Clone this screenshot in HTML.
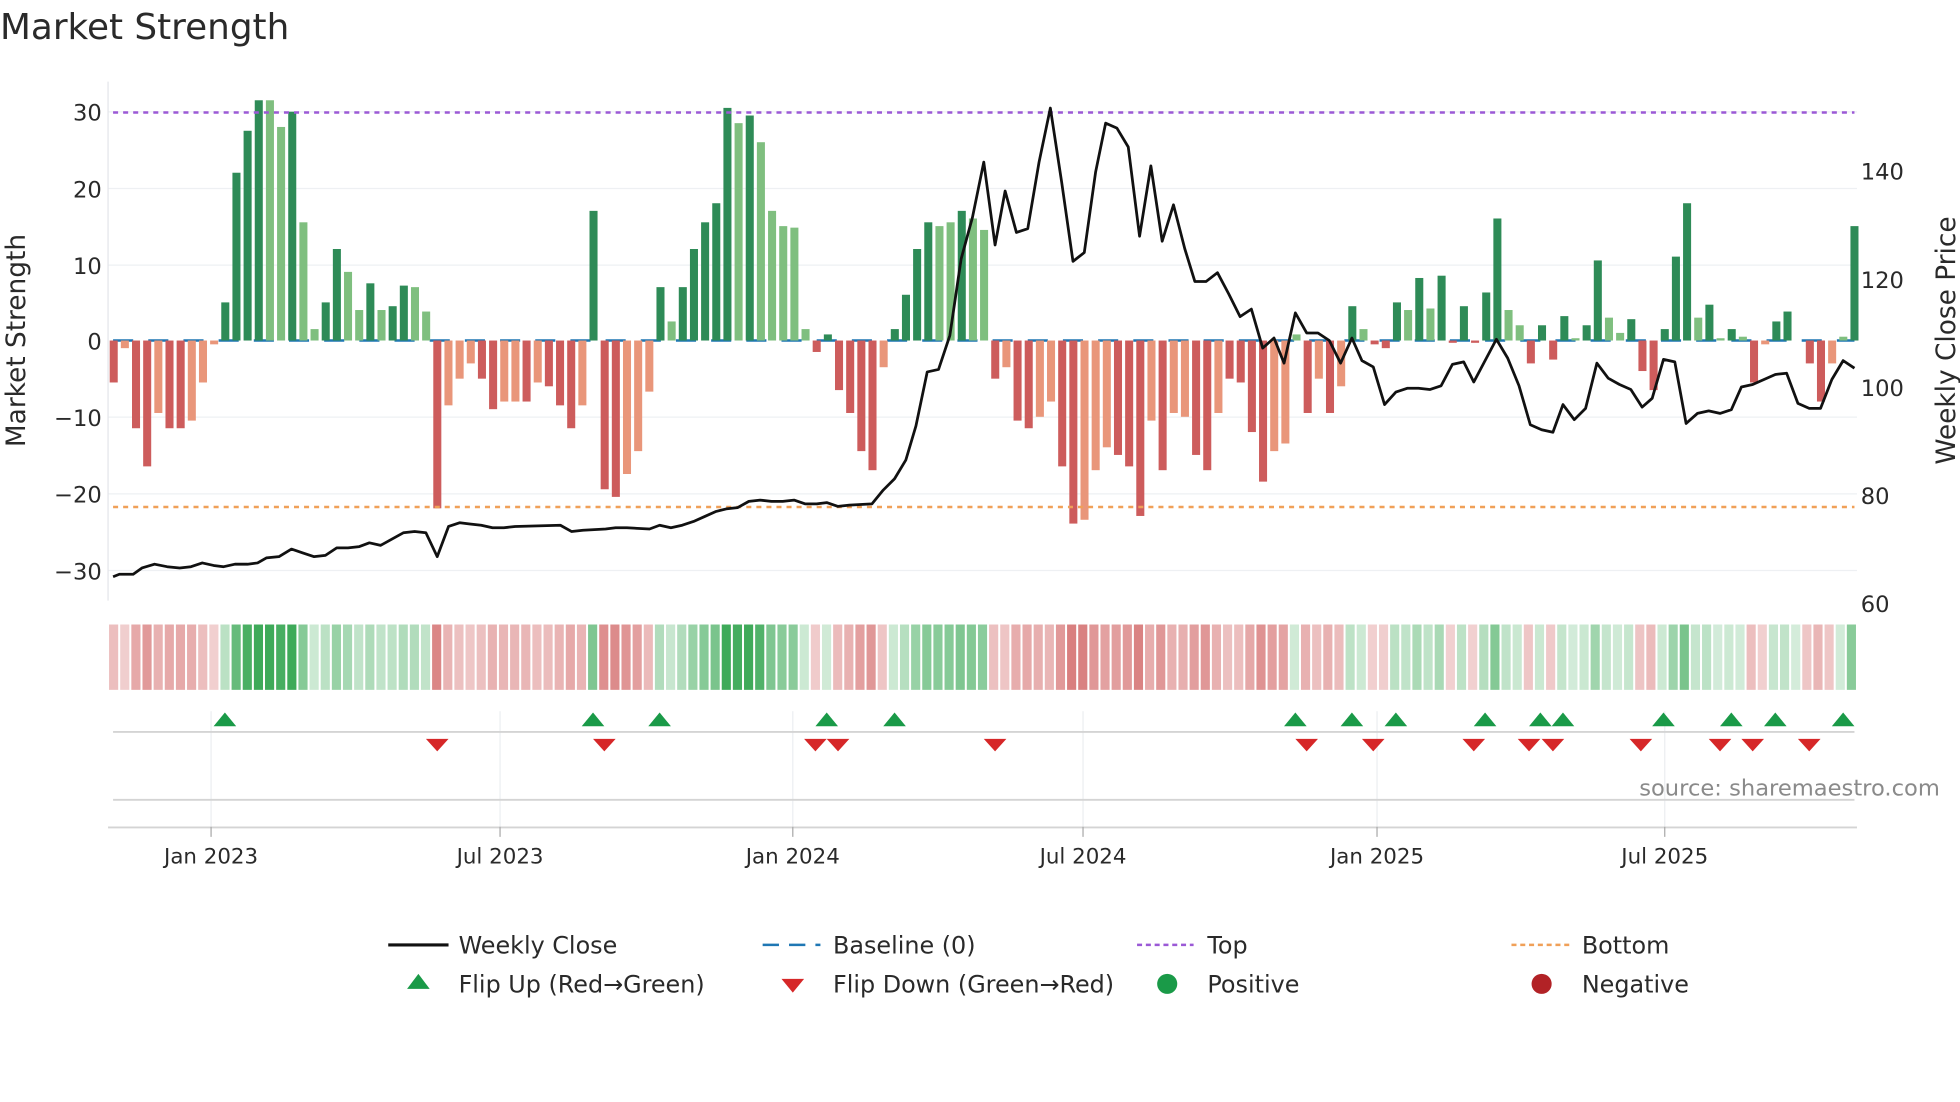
<!DOCTYPE html>
<html><head><meta charset="utf-8"><style>
html,body{margin:0;padding:0;background:#fff;overflow:hidden}
svg{display:block}
text{font-family:"DejaVu Sans","Liberation Sans",sans-serif;fill:#2a2a2a}
</style></head><body>
<svg id="s" width="1960" height="1102" viewBox="0 0 1560 877" preserveAspectRatio="none" xmlns="http://www.w3.org/2000/svg">
<rect width="1560" height="877" fill="#fff"/>
<text x="0" y="31" font-size="28.5">Market Strength</text>
<g stroke="#eef0f3" stroke-width="1">
<line x1="86" y1="89" x2="1478" y2="89"/><line x1="86" y1="150" x2="1478" y2="150"/><line x1="86" y1="211" x2="1478" y2="211"/>
<line x1="86" y1="332" x2="1478" y2="332"/><line x1="86" y1="393" x2="1478" y2="393"/><line x1="86" y1="454" x2="1478" y2="454"/>
</g>
<line x1="86" y1="65" x2="86" y2="478" stroke="#e4e6ea" stroke-width="1"/>
<g font-size="18" text-anchor="end">
<text x="81" y="96">30</text><text x="81" y="157">20</text><text x="81" y="218">10</text><text x="81" y="278">0</text>
<text x="81" y="339">−10</text><text x="81" y="400">−20</text><text x="81" y="461">−30</text>
</g>
<g font-size="18">
<text x="1481" y="143">140</text><text x="1481" y="229">120</text><text x="1481" y="315">100</text><text x="1481" y="401">80</text><text x="1481" y="487">60</text>
</g>
<text transform="translate(20,271) rotate(-90)" font-size="21" text-anchor="middle">Market Strength</text>
<text transform="translate(1556,271) rotate(-90)" font-size="21" text-anchor="middle">Weekly Close Price</text>
<line x1="90" y1="271" x2="1476" y2="271" stroke="#1f77b4" stroke-width="2" stroke-dasharray="16,12"/>
<g id="bars"></g>
<line x1="90" y1="89.5" x2="1476" y2="89.5" stroke="#9b59d6" stroke-width="2" stroke-dasharray="4,4"/>
<line x1="90" y1="403.5" x2="1476" y2="403.5" stroke="#f0a058" stroke-width="2" stroke-dasharray="4,4"/>
<polyline id="price" fill="none" stroke="#111" stroke-width="2.2" stroke-linejoin="round"/>
<g id="heat"></g>
<g stroke="#eceef1" stroke-width="1">
<line x1="168" y1="566" x2="168" y2="658"/><line x1="398" y1="566" x2="398" y2="658"/><line x1="631" y1="566" x2="631" y2="658"/>
<line x1="862" y1="566" x2="862" y2="658"/><line x1="1096" y1="566" x2="1096" y2="658"/><line x1="1325" y1="566" x2="1325" y2="658"/>
</g>
<line x1="90" y1="582.5" x2="1476" y2="582.5" stroke="#d4d4d4" stroke-width="1.5"/>
<line x1="90" y1="636.5" x2="1476" y2="636.5" stroke="#d4d4d4" stroke-width="1.5"/>
<line x1="86" y1="658.5" x2="1478" y2="658.5" stroke="#d4d4d4" stroke-width="1.5"/>
<g stroke="#aaa" stroke-width="1">
<line x1="168" y1="658" x2="168" y2="666"/><line x1="398" y1="658" x2="398" y2="666"/><line x1="631" y1="658" x2="631" y2="666"/>
<line x1="862" y1="658" x2="862" y2="666"/><line x1="1096" y1="658" x2="1096" y2="666"/><line x1="1325" y1="658" x2="1325" y2="666"/>
</g>
<g id="tri"></g>
<text x="1544" y="633" font-size="18" text-anchor="end" style="fill:#8a8a8a">source: sharemaestro.com</text>
<g font-size="17" text-anchor="middle">
<text x="168" y="687">Jan 2023</text><text x="398" y="687">Jul 2023</text><text x="631" y="687">Jan 2024</text>
<text x="862" y="687">Jul 2024</text><text x="1096" y="687">Jan 2025</text><text x="1325" y="687">Jul 2025</text>
</g>
<g font-size="19">
<line x1="309" y1="752" x2="357" y2="752" stroke="#111" stroke-width="2.5"/>
<text x="365" y="759">Weekly Close</text>
<line x1="607" y1="752" x2="653" y2="752" stroke="#1f77b4" stroke-width="2" stroke-dasharray="13,8"/>
<text x="663" y="759">Baseline (0)</text>
<line x1="905" y1="752" x2="950" y2="752" stroke="#9b59d6" stroke-width="2" stroke-dasharray="4,3"/>
<text x="961" y="759">Top</text>
<line x1="1203" y1="752" x2="1249" y2="752" stroke="#f0a058" stroke-width="2" stroke-dasharray="4,3"/>
<text x="1259" y="759">Bottom</text>
<polygon points="324,787 342,787 333,775" fill="#1a9a48"/>
<text x="365" y="790">Flip Up (Red→Green)</text>
<polygon points="622,779 640,779 631,790" fill="#d62728"/>
<text x="663" y="790">Flip Down (Green→Red)</text>
<circle cx="929" cy="783" r="8" fill="#1a9a48"/>
<text x="961" y="790">Positive</text>
<circle cx="1227" cy="783" r="8" fill="#b22226"/>
<text x="1259" y="790">Negative</text>
</g>
</svg>
<script>
var V=[[-5.5,1],[-1,0],[-11.5,1],[-16.5,1],[-9.5,0],[-11.5,1],[-11.5,1],[-10.5,0],[-5.5,0],[-0.5,0],[5,1],[22,1],[27.5,1],[31.5,1],[31.5,0],[28,0],[30,1],[15.5,0],[1.5,0],[5,1],[12,1],[9,0],[4,0],[7.5,1],[4,0],[4.5,1],[7.2,1],[7,0],[3.8,0],[-22,1],[-8.5,0],[-5,0],[-3,0],[-5,1],[-9,1],[-8,0],[-8,0],[-8,1],[-5.5,0],[-6,1],[-8.5,1],[-11.5,1],[-8.5,0],[17,1],[-19.5,1],[-20.5,1],[-17.5,0],[-14.5,0],[-6.7,0],[7,1],[2.5,0],[7,1],[12,1],[15.5,1],[18,1],[30.5,1],[28.5,0],[29.5,1],[26,0],[17,0],[15,0],[14.8,0],[1.5,0],[-1.5,1],[0.8,1],[-6.5,1],[-9.5,1],[-14.5,1],[-17,1],[-3.5,0],[1.5,1],[6,1],[12,1],[15.5,1],[15,0],[15.5,0],[17,1],[16,0],[14.5,0],[-5,1],[-3.5,0],[-10.5,1],[-11.5,1],[-10,0],[-8,0],[-16.5,1],[-24,1],[-23.5,0],[-17,0],[-14,0],[-15,1],[-16.5,1],[-23,1],[-10.5,0],[-17,1],[-9.5,0],[-10,0],[-15,1],[-17,1],[-9.5,0],[-5,1],[-5.5,1],[-12,1],[-18.5,1],[-14.5,0],[-13.5,0],[0.8,0],[-9.5,1],[-5,0],[-9.5,1],[-6,0],[4.5,1],[1.5,0],[-0.5,1],[-1,1],[5,1],[4,0],[8.2,1],[4.2,0],[8.5,1],[-0.3,1],[4.5,1],[-0.3,1],[6.3,1],[16,1],[4,0],[2,0],[-3,1],[2,1],[-2.5,1],[3.2,1],[0.3,0],[2,1],[10.5,1],[3,0],[1,0],[2.8,1],[-4,1],[-6.5,1],[1.5,1],[11,1],[18,1],[3,0],[4.7,1],[0.3,0],[1.5,1],[0.5,0],[-5.5,1],[-0.5,0],[2.5,1],[3.8,1],[0,1],[-3,1],[-8,1],[-3,0],[0.5,0],[15,1]];
var N=V.length,NS="http://www.w3.org/2000/svg",step=(1476-90.5)/(N-1);
function el(t,a,p){var e=document.createElementNS(NS,t);for(var k in a)e.setAttribute(k,a[k]);document.getElementById(p).appendChild(e);}
var hw=(1478-86)/N;
V.forEach(function(d,i){var v=d[0],cx=90.5+step*i,h=Math.abs(v)*6.07;
 var c=v>=0?(d[1]?"#2e8b57":"#7fbf7f"):(d[1]?"#cd5c5c":"#e9967a");
 if(h>0.3)el("rect",{x:cx-3.2,y:v>=0?271-h:271,width:6.4,height:h,fill:c},"bars");
 var m=Math.min(Math.abs(v)/30,1),a=0.2+0.7*m;
 var hc=v>=0?"rgba(40,160,70,"+a+")":"rgba(200,70,70,"+(0.25+0.55*m)+")";
 el("rect",{x:86+hw*i+0.8,y:497,width:hw-1.6,height:52,fill:hc},"heat");
});
var P=[[90,459],[95,457],[106,457],[113,452],[123,449],[133,451],[143,452],[152,451],[161,448],[170,450],[178,451],[187,449],[197,449],[205,448],[212,444],[222,443],[232,437],[241,440],[250,443],[259,442],[268,436],[277,436],[286,435],[294,432],[303,434],[312,429],[321,424],[330,423],[339,424],[348,443],[357,419],[366,416],[374,417],[383,418],[392,420],[401,420],[410,419],[446,418],[455,423],[464,422],[482,421],[490,420],[499,420],[517,421],[525,418],[534,420],[543,418],[552,415],[561,411],[570,407],[578,405],[587,404],[596,399],[605,398],[614,399],[623,399],[632,398],[641,401],[650,401],[658,400],[667,403],[676,402],[694,401],[703,390],[712,381],[721,366],[729,339],[738,296],[747,294],[756,267],[765,206],[774,173],[783,129],[792,195],[800,152],[809,185],[818,182],[827,129],[836,86],[845,145],[854,208],[863,201],[872,137],[880,98],[889,102],[898,117],[907,188],[916,132],[925,192],[934,163],[943,198],[951,224],[960,224],[969,217],[978,234],[987,252],[996,246],[1005,277],[1014,269],[1022,289],[1031,249],[1040,265],[1049,265],[1058,271],[1067,289],[1076,269],[1084,287],[1093,292],[1102,322],[1111,312],[1120,309],[1129,309],[1138,310],[1147,307],[1156,290],[1165,288],[1173,304],[1182,287],[1191,270],[1200,285],[1209,307],[1218,338],[1227,342],[1236,344],[1244,322],[1253,334],[1262,325],[1271,289],[1280,301],[1289,306],[1298,310],[1307,324],[1315,317],[1324,286],[1333,288],[1342,337],[1351,329],[1360,327],[1369,329],[1378,326],[1386,308],[1395,306],[1404,302],[1413,298],[1422,297],[1431,321],[1440,325],[1449,325],[1458,302],[1467,287],[1476,293]];
document.getElementById("price").setAttribute("points",P.map(function(p){return p.join(",")}).join(" "));
[179,472,525,658,712,1031,1076,1111,1182,1226,1244,1324,1378,1413,1467].forEach(function(x){el("polygon",{points:(x-9)+",578 "+(x+9)+",578 "+x+",567",fill:"#1a9a48"},"tri");});
[348,481,649,667,792,1040,1093,1173,1217,1236,1306,1369,1395,1440].forEach(function(x){el("polygon",{points:(x-9)+",588 "+(x+9)+",588 "+x+",598",fill:"#d62728"},"tri");});
</script>
</body></html>
